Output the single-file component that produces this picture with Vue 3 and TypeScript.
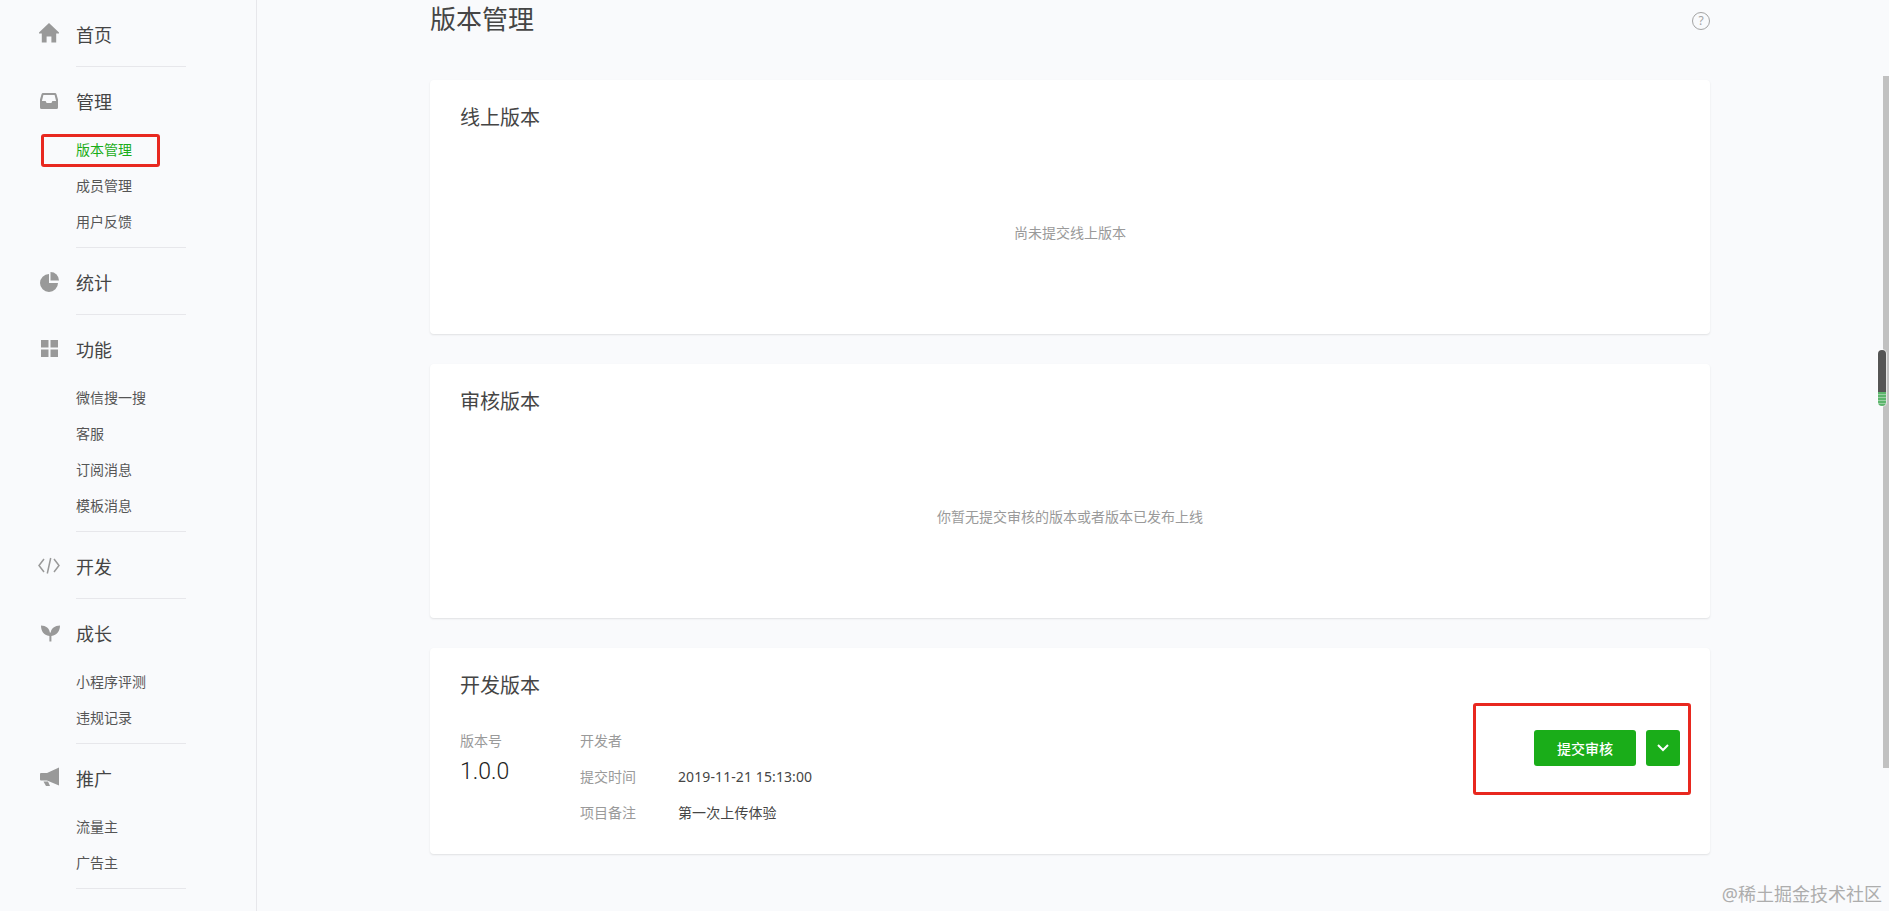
<script setup lang="ts">
type NavSection = {
  title: string
  icon: string
  children?: { label: string; active?: boolean }[]
}

const sections: NavSection[] = [
  { title: "首页", icon: "home" },
  {
    title: "管理",
    icon: "inbox",
    children: [{ label: "版本管理", active: true }, { label: "成员管理" }, { label: "用户反馈" }],
  },
  { title: "统计", icon: "pie" },
  {
    title: "功能",
    icon: "grid",
    children: [{ label: "微信搜一搜" }, { label: "客服" }, { label: "订阅消息" }, { label: "模板消息" }],
  },
  { title: "开发", icon: "code" },
  { title: "成长", icon: "sprout", children: [{ label: "小程序评测" }, { label: "违规记录" }] },
  { title: "推广", icon: "megaphone", children: [{ label: "流量主" }, { label: "广告主" }] },
]
</script>

<template>
  <div class="page">
    <aside class="sidebar">
      <section v-for="s in sections" :key="s.title" class="nav-section" :class="{ 'has-children': s.children }">
        <div class="nav-title">
          <svg class="nav-icon" viewBox="0 0 22 22" width="22" height="22">
            <path v-if="s.icon === 'home'" d="M11 0 L21 9.6 V10.6 H18.2 V19.6 H13.4 V13.4 H8.6 V19.6 H3.8 V10.6 H1 V9.6Z" />
            <path
              v-else-if="s.icon === 'inbox'"
              fill-rule="evenodd"
              d="M5 3 H17 Q18 3 18.4 4 L20 9.5 V17.5 Q20 19 18.5 19 H3.5 Q2 19 2 17.5 V9.5 L3.6 4 Q4 3 5 3Z M5.4 5 L3.9 11 H7.6 L8.6 13 H13.4 L14.4 11 H18.1 L16.6 5Z"
            />
            <g v-else-if="s.icon === 'pie'">
              <path d="M11 3 V12 H20 A9 9 0 1 1 11 3Z" />
              <path d="M12.5 1 A8.5 8.5 0 0 1 21 9.5 H12.5Z" />
            </g>
            <g v-else-if="s.icon === 'grid'">
              <rect x="3" y="2" width="7.5" height="7.5" />
              <rect x="12.5" y="2" width="7.5" height="7.5" />
              <rect x="3" y="11.5" width="7.5" height="7.5" />
              <rect x="12.5" y="11.5" width="7.5" height="7.5" />
            </g>
            <path
              v-else-if="s.icon === 'code'"
              class="stroked"
              d="M6 4 L1 10.5 L6 17 M16 4 L21 10.5 L16 17 M12.7 3 L9.3 18.5"
            />
            <path
              v-else-if="s.icon === 'sprout'"
              d="M3 3.5 C8 3.5 11.5 6.5 11.8 10.5 H12.8 C13 6.5 17 3.5 22 3.5 C22 9 19 13 13.4 14 V19.5 H11.4 V14 C5.5 13 3 9 3 3.5Z"
            />
            <g v-else>
              <path d="M21 0.5 V18.5 L9 13.5 H3 Q2 13.5 2 12.5 V7 Q2 6 3 6 H9Z" />
              <path d="M5.5 14.5 H10 L12 19 H8Z" />
            </g>
          </svg>
          <span>{{ s.title }}</span>
        </div>
        <ul v-if="s.children" class="nav-sub">
          <li v-for="c in s.children" :key="c.label" :class="{ active: c.active }">{{ c.label }}</li>
        </ul>
      </section>
    </aside>

    <main class="main">
      <header class="page-head">
        <h1>版本管理</h1>
        <span class="help">?</span>
      </header>

      <section class="card">
        <h2>线上版本</h2>
        <p class="empty">尚未提交线上版本</p>
      </section>

      <section class="card">
        <h2>审核版本</h2>
        <p class="empty">你暂无提交审核的版本或者版本已发布上线</p>
      </section>

      <section class="card dev">
        <h2>开发版本</h2>
        <div class="dev-body">
          <div class="version">
            <div class="label">版本号</div>
            <div class="version-no">1.0.0</div>
          </div>
          <dl class="meta">
            <div><dt class="label">开发者</dt><dd></dd></div>
            <div><dt class="label">提交时间</dt><dd>2019-11-21 15:13:00</dd></div>
            <div><dt class="label">项目备注</dt><dd>第一次上传体验</dd></div>
          </dl>
          <div class="actions">
            <button class="btn">提交审核</button>
            <button class="btn more">
              <svg viewBox="0 0 14 10" width="14" height="10">
                <path d="M2 2 L7 7 L12 2" fill="none" stroke="#fff" stroke-width="2" />
              </svg>
            </button>
          </div>
        </div>
      </section>
    </main>

    <!-- annotations and scrollbar from the screenshot, they lie over the page -->
    <div class="mark mark-nav"></div>
    <div class="mark mark-actions"></div>
    <div class="scroll-strip"></div>
    <div class="scroll-pill"></div>
    <div class="watermark">@稀土掘金技术社区</div>
  </div>
</template>

<style scoped>
.page {
  position: relative;
  display: flex;
  height: 911px;
  overflow: hidden;
  background: #f9fafc;
  color: #454545;
  font-family: "Noto Sans", "Noto Sans CJK SC", sans-serif;
}

.sidebar {
  width: 256px;
  flex-shrink: 0;
  box-sizing: content-box;
  border-right: 1px solid #e7e7eb;
}
.nav-section {
  width: 110px;
  margin-left: 76px;
  padding: 16px 0 14px;
  border-bottom: 1px solid #e7e7eb;
}
.nav-section.has-children {
  padding-bottom: 7px;
}
.nav-title {
  display: flex;
  align-items: center;
  height: 36px;
  margin-left: -38px;
  font-size: 18px;
  white-space: nowrap;
}
.nav-icon {
  margin-right: 16px;
  fill: #999;
}
.nav-icon .stroked {
  fill: none;
  stroke: #999;
  stroke-width: 1.5;
}
.nav-sub {
  list-style: none;
  margin: 13px 0 0;
  padding: 0;
  color: #555;
  font-size: 14px;
  line-height: 36px;
  white-space: nowrap;
}
.nav-sub .active {
  color: #1aad19;
}

.main {
  width: 1280px;
  margin-left: 173px;
}
.page-head {
  display: flex;
  justify-content: space-between;
  height: 36px;
  margin-bottom: 44px;
}
.page-head h1 {
  margin: 0;
  padding-top: 2px;
  font-size: 26px;
  font-weight: 400;
  line-height: 34px;
}
.help {
  width: 16px;
  height: 16px;
  margin-top: 12px;
  margin-right: 0;
  border: 1px solid #a3a3a3;
  border-radius: 50%;
  color: #a3a3a3;
  font-size: 12px;
  line-height: 16px;
  text-align: center;
}

.card {
  height: 254px;
  margin-bottom: 30px;
  padding: 22px 30px 0;
  box-sizing: border-box;
  background: #fff;
  border-radius: 4px;
  box-shadow: 0 1px 2px rgba(0, 0, 0, 0.1);
}
.card.dev {
  height: 206px;
}
.card h2 {
  margin: 0;
  padding-top: 2px;
  font-size: 20px;
  font-weight: 400;
  line-height: 28px;
}
.empty {
  margin: 91px 0 0;
  color: #9a9a9a;
  font-size: 14px;
  line-height: 20px;
  text-align: center;
}

.dev-body {
  display: flex;
  margin-top: 23px;
  font-size: 14px;
  line-height: 36px;
}
.label {
  color: #9a9a9a;
}
.version {
  width: 120px;
}
.version-no {
  color: #222;
  font-family: Roboto, sans-serif;
  font-size: 23px;
  font-weight: 300;
  line-height: 26px;
}
.meta {
  margin: 0;
}
.meta > div {
  display: flex;
  height: 36px;
}
.meta dt {
  width: 98px;
}
.meta dd {
  margin: 0;
  letter-spacing: 0.1px;
}
.actions {
  display: flex;
  gap: 10px;
  margin-top: 7px;
  margin-left: auto;
}
.btn {
  display: flex;
  align-items: center;
  justify-content: center;
  width: 102px;
  height: 36px;
  padding: 0;
  border: 0;
  border-radius: 3px;
  background: #1aad19;
  color: #fff;
  font-family: inherit;
  font-size: 14px;
  font-weight: 500;
}
.btn.more {
  width: 34px;
}

.mark {
  position: absolute;
  box-sizing: border-box;
  border: 3px solid #e8281f;
  border-radius: 3px;
}
.mark-nav {
  left: 41px;
  top: 134px;
  width: 119px;
  height: 33px;
}
.mark-actions {
  left: 1473px;
  top: 703px;
  width: 218px;
  height: 92px;
}
.scroll-strip {
  position: absolute;
  left: 1883px;
  top: 76px;
  width: 6px;
  height: 692px;
  background: #c1c1c1;
}
.scroll-pill {
  position: absolute;
  left: 1878px;
  top: 350px;
  width: 8px;
  height: 56px;
  border-radius: 4px;
  box-shadow: 0 0 0 1px rgba(255, 255, 255, 0.6);
  background:
    repeating-linear-gradient(#5cb56c 0, #5cb56c 2px, #9ad0a4 2px, #9ad0a4 3px) 0 42px / 100% 14px no-repeat,
    #555;
}
.watermark {
  position: absolute;
  right: 7px;
  bottom: 5px;
  color: #adadad;
  font-size: 18px;
  line-height: 24px;
  white-space: nowrap;
}
</style>

<style>
html,
body {
  margin: 0;
  overflow: hidden;
}
</style>
